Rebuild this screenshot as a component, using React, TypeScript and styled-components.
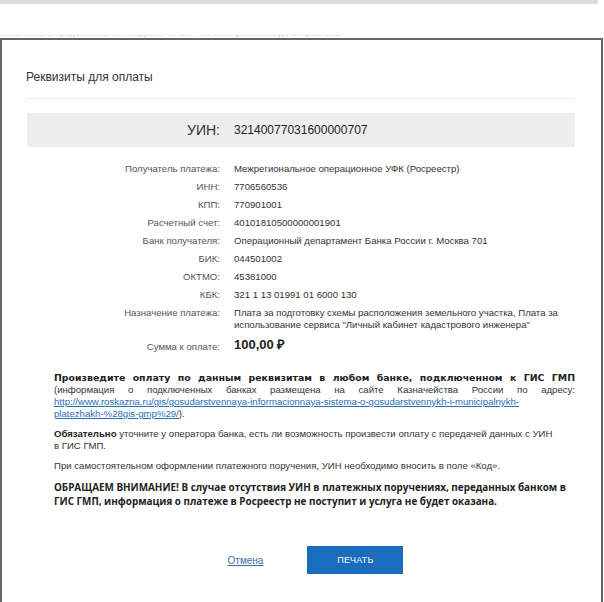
import React from 'react';
import styled, { createGlobalStyle } from 'styled-components';

const GlobalStyle = createGlobalStyle`
  html, body {
    margin: 0;
    padding: 0;
    background: #fff;
  }
  body {
    font-family: "Liberation Sans", Arial, sans-serif;
    color: #333;
    overflow: hidden;
  }
`;

type Field = {
  label: string;
  value: string;
};

const fields: Field[] = [
  { label: 'Получатель платежа:', value: 'Межрегиональное операционное УФК (Росреестр)' },
  { label: 'ИНН:', value: '7706560536' },
  { label: 'КПП:', value: '770901001' },
  { label: 'Расчетный счет:', value: '40101810500000001901' },
  { label: 'Банк получателя:', value: 'Операционный департамент Банка России г. Москва 701' },
  { label: 'БИК:', value: '044501002' },
  { label: 'ОКТМО:', value: '45381000' },
  { label: 'КБК:', value: '321 1 13 01991 01 6000 130' },
  {
    label: 'Назначение платежа:',
    value:
      'Плата за подготовку схемы расположения земельного участка, Плата за использование сервиса "Личный кабинет кадастрового инженера"',
  },
];

const Page = styled.div`
  width: 604px;
  height: 602px;
  overflow: hidden;
`;

const TopBar = styled.div`
  height: 4px;
  margin-right: 6px;
  background: #dcdcdc;
`;

// text of the page underneath, mostly hidden by the modal
const UnderText = styled.div`
  height: 3px;
  margin-top: 31px;
  overflow: hidden;
  position: relative;
  span {
    position: absolute;
    left: 0;
    bottom: 0;
    font-size: 9px;
    line-height: 9px;
    color: #cfcfcf;
    white-space: nowrap;
  }
`;

const Modal = styled.div`
  width: 603px;
  min-height: 570px;
  border: 2px solid #666;
  border-bottom: none;
  background: #fff;
  padding: 0 26px 0 24px;
  box-sizing: border-box;
`;

const Header = styled.div`
  padding: 29px 0 13px 0;
  font-size: 12px;
  line-height: 16px;
  color: #333;
  border-bottom: 1px solid #ececec;
`;

const UinBox = styled.div`
  margin: 14px 0 0 1px;
  height: 34px;
  background: #eeeeee;
  display: grid;
  grid-template-columns: 193px 1fr;
  column-gap: 14px;
  align-items: center;
`;

const UinLabel = styled.div`
  text-align: right;
  font-size: 14px;
  color: #333;
`;

const UinValue = styled.div`
  font-size: 12px;
  color: #222;
`;

const Details = styled.div`
  margin: 13px 0 0 1px;
  display: grid;
  grid-template-columns: 193px 1fr;
  column-gap: 14px;
  font-size: 9.6px;
  line-height: 12px;
`;

const Label = styled.div<{ $gap?: number }>`
  text-align: right;
  color: #555;
  padding: 3px 0;
  margin-top: ${(p) => p.$gap || 0}px;
`;

const Value = styled.div<{ $gap?: number; $big?: boolean }>`
  color: #333;
  padding: 3px 0;
  margin-top: ${(p) => p.$gap || 0}px;
  ${(p) =>
    p.$big &&
    `
    font-size: 13px;
    font-weight: bold;
    color: #222;
    padding: 1px 0;
  `}
`;

const Notes = styled.div`
  margin: 16px 0 0 28px;
  font-size: 9.6px;
  line-height: 12px;
  color: #333;
`;

const Para = styled.p<{ $justify?: boolean; $strong?: boolean }>`
  margin: 0 0 8px;
  text-align: ${(p) => (p.$justify ? 'justify' : 'left')};
  ${(p) =>
    p.$strong &&
    `
    font-family: "Open Sans", "Liberation Sans", sans-serif;
    font-weight: bold;
    font-size: 9.9px;
    line-height: 14px;
    color: #222;
  `}
`;

const Lead = styled.b`
  font-family: "DejaVu Sans", "Liberation Sans", sans-serif;
  font-size: 9.4px;
  color: #222;
`;

const Emph = styled.b`
  color: #222;
`;

const Link = styled.a`
  color: #2a6db5;
  text-decoration: underline;
`;

const Actions = styled.div`
  margin-top: 38px;
  padding-left: 30px;
  display: flex;
  justify-content: center;
  align-items: center;
  gap: 44px;
`;

const CancelLink = styled.a`
  font-size: 10px;
  color: #3a6ea5;
  text-decoration: underline;
`;

const PrintButton = styled.button`
  width: 96px;
  height: 28px;
  border: none;
  background: #1a6cbd;
  color: #fff;
  font-family: "Liberation Sans", Arial, sans-serif;
  font-size: 9px;
  letter-spacing: 0.2px;
`;

const App: React.FC = () => {
  return (
    <Page>
      <GlobalStyle />
      <TopBar />
      <UnderText>
        <span>Заявление о предоставлении сведений из ЕГРН в электронном виде отправлено</span>
      </UnderText>
      <Modal>
        <Header>Реквизиты для оплаты</Header>
        <UinBox>
          <UinLabel>УИН:</UinLabel>
          <UinValue>32140077031600000707</UinValue>
        </UinBox>
        <Details>
          {fields.map((f) => (
            <React.Fragment key={f.label}>
              <Label>{f.label}</Label>
              <Value>{f.value}</Value>
            </React.Fragment>
          ))}
          <Label $gap={4}>Сумма к оплате:</Label>
          <Value $gap={4} $big>
            100,00 ₽
          </Value>
        </Details>
        <Notes>
          <Para $justify>
            <Lead>Произведите оплату по данным реквизитам в любом банке, подключенном к ГИС ГМП</Lead>{' '}
            (информация о подключенных банках размещена на сайте Казначейства России по адресу:{' '}
            <Link href="#">
              http://www.roskazna.ru/gis/gosudarstvennaya-informacionnaya-sistema-o-gosudarstvennykh-i-municipalnykh-
              <br />
              platezhakh-%28gis-gmp%29/
            </Link>
            ).
          </Para>
          <Para>
            <Emph>Обязательно</Emph> уточните у оператора банка, есть ли возможность произвести оплату с передачей
            данных с УИН
            <br />в ГИС ГМП.
          </Para>
          <Para>При самостоятельном оформлении платежного поручения, УИН необходимо вносить в поле «Код».</Para>
          <Para $strong>
            ОБРАЩАЕМ ВНИМАНИЕ! В случае отсутствия УИН в платежных поручениях, переданных банком в ГИС ГМП, информация о
            платеже в Росреестр не поступит и услуга не будет оказана.
          </Para>
        </Notes>
        <Actions>
          <CancelLink href="#">Отмена</CancelLink>
          <PrintButton>ПЕЧАТЬ</PrintButton>
        </Actions>
      </Modal>
    </Page>
  );
};

export default App;
